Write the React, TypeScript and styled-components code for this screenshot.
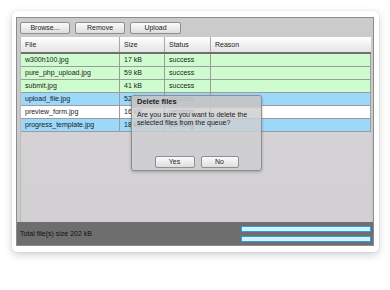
import React from "react";
import styled, { createGlobalStyle } from "styled-components";

const Global = createGlobalStyle`
  html, body { margin: 0; padding: 0; background: #ffffff; }
  body { font-family: "Liberation Sans", Arial, sans-serif; font-size: 7px; color: #1a1a1a; }
`;

const Page = styled.div`
  width: 390px;
  height: 290px;
  padding: 11px 0 0 12px;
  box-sizing: border-box;
`;

const Card = styled.div`
  width: 367px;
  height: 241px;
  box-sizing: border-box;
  padding: 6px 5px 6px 4px;
  background: #ffffff;
  border-radius: 5px;
  box-shadow: 0 3px 8px rgba(0, 0, 0, 0.18), 0 0 2px rgba(0, 0, 0, 0.12);
`;

const Panel = styled.div`
  height: 100%;
  box-sizing: border-box;
  border: 1px solid #8c8c8c;
  background: #cbcbcb;
  display: flex;
  flex-direction: column;
`;

const Toolbar = styled.div`
  display: flex;
  gap: 5px;
  padding: 4px 0 3px 3px;
`;

const Button = styled.button<{ $w?: number }>`
  width: ${(p) => p.$w ?? 50}px;
  height: 12px;
  padding: 0;
  margin: 0;
  box-sizing: border-box;
  border: 1px solid #8e8e8e;
  border-radius: 2px;
  background: linear-gradient(#fbfbfb, #dedede);
  font-family: "Liberation Sans", Arial, sans-serif;
  font-size: 7px;
  line-height: 10px;
  color: #222;
  text-align: center;
`;

const TableArea = styled.div`
  position: relative;
  flex: 1;
  margin: 0 2px 0 3px;
  background: linear-gradient(#d6d4d6, #d2d0d2);
  border-left: 1px solid #bcbcbc;
`;

const Cols = "98px 45px 46px 1fr";

const HeaderRow = styled.div`
  display: grid;
  grid-template-columns: ${Cols};
  height: 17px;
  box-sizing: border-box;
  background: linear-gradient(#ffffff, #e4e4e4);
  border-bottom: 2px solid #6f6f6f;
`;

const HeadCell = styled.div`
  padding-left: 4px;
  line-height: 15px;
  color: #222;
  border-left: 1px solid #a8a8a8;
  &:first-child { border-left: none; }
`;

const Row = styled.div<{ $kind: "ok" | "sel" | "plain" }>`
  display: grid;
  grid-template-columns: ${Cols};
  height: 13px;
  box-sizing: border-box;
  border-bottom: 1px solid #9c9c9c;
  border-right: 1px solid #9c9c9c;
  background: ${(p) =>
    p.$kind === "ok" ? "#cffccf" : p.$kind === "sel" ? "#9cd8fa" : "#ffffff"};
`;

const Cell = styled.div`
  padding-left: 4px;
  line-height: 12px;
  white-space: nowrap;
  overflow: hidden;
  color: #1a1a1a;
  border-left: 1px solid #9c9c9c;
  &:first-child { border-left: none; }
`;

const Dialog = styled.div`
  position: absolute;
  left: 110px;
  top: 58px;
  width: 131px;
  height: 76px;
  box-sizing: border-box;
  border: 1px solid #8e8e8e;
  border-radius: 3px;
  background: rgba(206, 206, 208, 0.84);
  box-shadow: 0 1px 3px rgba(0, 0, 0, 0.25);
  display: flex;
  flex-direction: column;
  overflow: hidden;
`;

const DialogTitle = styled.div`
  height: 12px;
  padding-left: 5px;
  line-height: 12px;
  font-weight: bold;
  font-size: 7.5px;
  color: #1a1a1a;
  background: rgba(190, 190, 192, 0.55);
`;

const DialogText = styled.div`
  padding: 3px 5px 0;
  line-height: 8px;
  color: #1a1a1a;
  flex: 1;
`;

const DialogButtons = styled.div`
  display: flex;
  justify-content: center;
  gap: 6px;
  padding: 0 0 2px 0;
`;

const Footer = styled.div`
  height: 23px;
  background: #6e6e6e;
  display: flex;
  align-items: center;
  justify-content: space-between;
  padding: 0 2px 0 3px;
`;

const Total = styled.div`
  color: #111;
`;

const Bars = styled.div`
  display: flex;
  flex-direction: column;
  gap: 4px;
`;

const Bar = styled.div`
  width: 130px;
  height: 6px;
  box-sizing: border-box;
  border: 1px solid #2a9fe2;
  background: #d6f1ff;
`;

const rows: { name: string; size: string; status: string; kind: "ok" | "sel" | "plain" }[] = [
  { name: "w300h100.jpg", size: "17 kB", status: "success", kind: "ok" },
  { name: "pure_php_upload.jpg", size: "59 kB", status: "success", kind: "ok" },
  { name: "submit.jpg", size: "41 kB", status: "success", kind: "ok" },
  { name: "upload_file.jpg", size: "52 kB", status: "success", kind: "sel" },
  { name: "preview_form.jpg", size: "16 kB", status: "pending", kind: "plain" },
  { name: "progress_template.jpg", size: "18 kB", status: "pending", kind: "sel" },
];

export default function App() {
  return (
    <Page>
      <Global />
      <Card>
        <Panel>
          <Toolbar>
            <Button>Browse...</Button>
            <Button>Remove</Button>
            <Button $w={51}>Upload</Button>
          </Toolbar>
          <TableArea>
            <HeaderRow>
              <HeadCell>File</HeadCell>
              <HeadCell>Size</HeadCell>
              <HeadCell>Status</HeadCell>
              <HeadCell>Reason</HeadCell>
            </HeaderRow>
            {rows.map((r) => (
              <Row key={r.name} $kind={r.kind}>
                <Cell>{r.name}</Cell>
                <Cell>{r.size}</Cell>
                <Cell>{r.status}</Cell>
                <Cell />
              </Row>
            ))}
            <Dialog>
              <DialogTitle>Delete files</DialogTitle>
              <DialogText>
                Are you sure you want to delete the
                <br />
                selected files from the queue?
              </DialogText>
              <DialogButtons>
                <Button $w={40}>Yes</Button>
                <Button $w={38}>No</Button>
              </DialogButtons>
            </Dialog>
          </TableArea>
          <Footer>
            <Total>Total file(s) size 202 kB</Total>
            <Bars>
              <Bar />
              <Bar />
            </Bars>
          </Footer>
        </Panel>
      </Card>
    </Page>
  );
}
